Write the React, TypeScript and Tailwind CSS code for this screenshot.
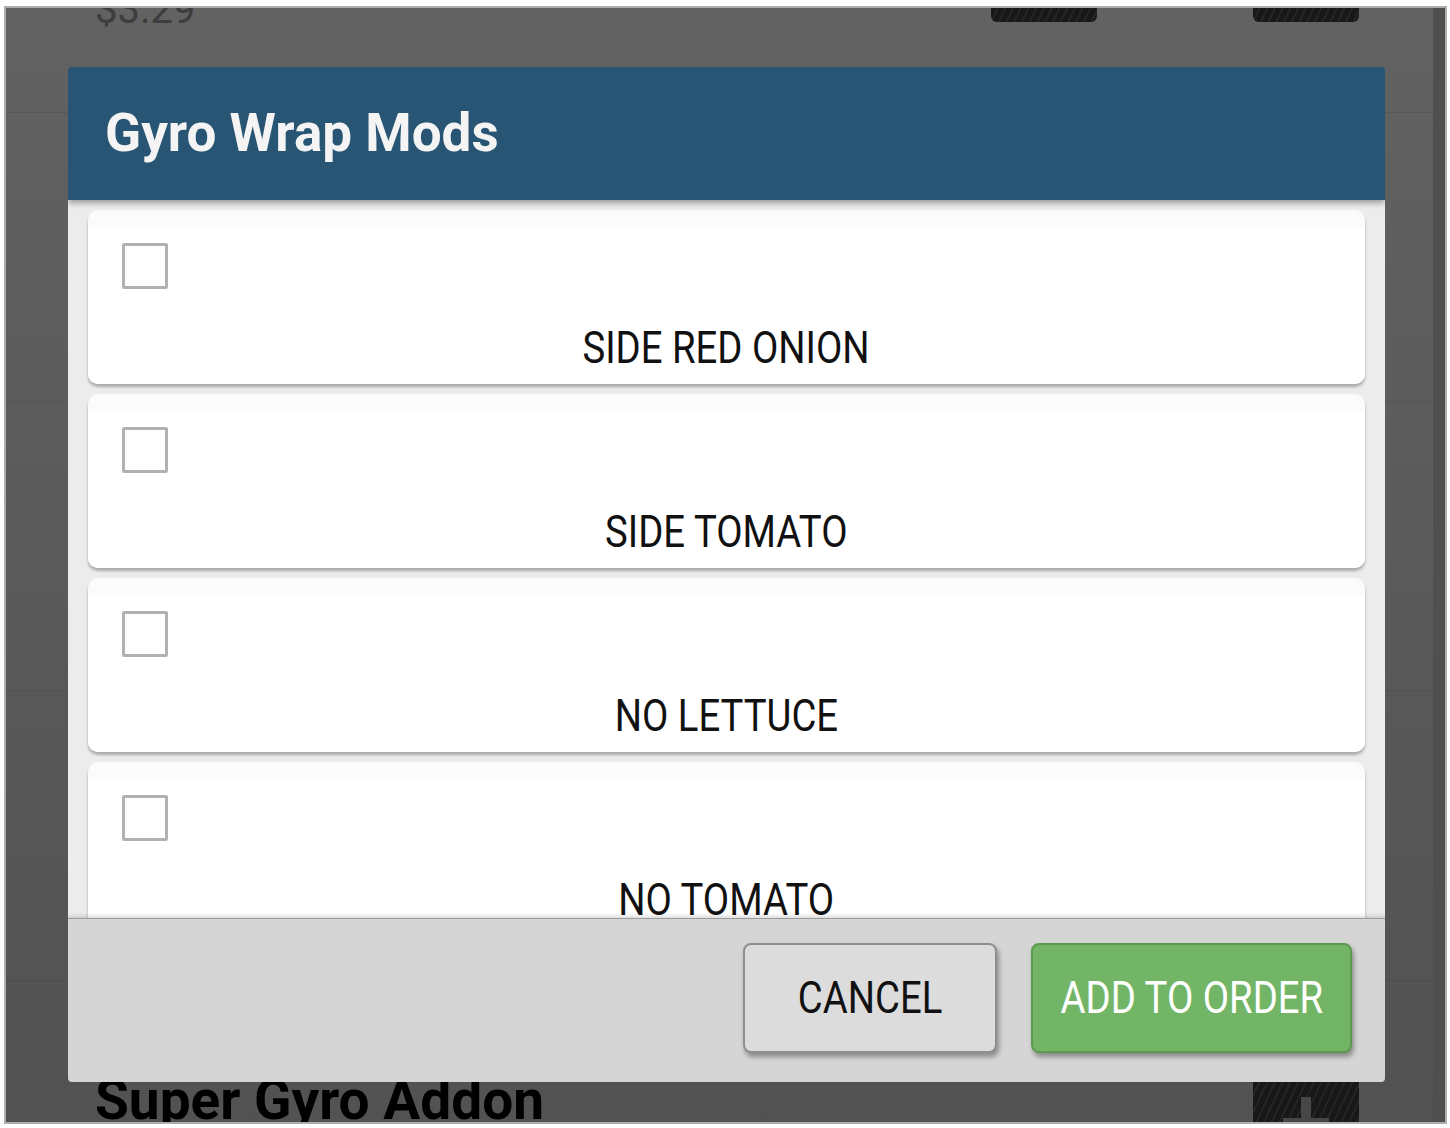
import React from "react";

const items = ["SIDE RED ONION", "SIDE TOMATO", "NO LETTUCE", "NO TOMATO"];

const cond = "inline-block scale-x-[0.87] whitespace-nowrap";

function Card({ label }: { label: string }) {
  return (
    <div className="h-[174px] shrink-0 rounded-[10px] bg-[linear-gradient(to_bottom,#fbfbfb_0px,#fbfbfb_18px,#ffffff_18px)] shadow-[0_3px_3px_rgba(0,0,0,0.28)] pt-[33px]">
      <div className="pl-[34px]">
        <div className="h-[46px] w-[46px] rounded-[2px] border-[3px] border-[#b1b1b1] bg-white" />
      </div>
      <div className="mt-[33px] text-center text-[44px] leading-[53px] text-[#111]">
        <span className={cond}>{label}</span>
      </div>
    </div>
  );
}

export default function App() {
  return (
    <div
      className="w-[1450px] h-[1128px] bg-white pl-[4px] pt-[6px] overflow-hidden"
      style={{ fontFamily: "Roboto, 'Liberation Sans', sans-serif" }}
    >
      <div className="w-[1443px] h-[1118px] border-2 border-[#aeaeae] flex">
        {/* main area */}
        <div className="relative w-[1427px] h-full overflow-hidden bg-[linear-gradient(to_bottom,#626262,#525252)]">
          {/* background list */}
          <div className="flex flex-col">
            <div className="h-[105px] border-b border-[#575757] flex items-start pl-[89px] pr-[74px]">
              <div className="mt-[-18px] text-[40px] leading-none text-[#3d3d3d]">$3.29</div>
              <div className="flex-1" />
              <div className="h-[14px] w-[106px] rounded-b-[6px] bg-[repeating-linear-gradient(115deg,#181818_0px,#181818_5px,#242424_5px,#242424_7px)]" />
              <div className="ml-[156px] h-[14px] w-[106px] rounded-b-[6px] bg-[repeating-linear-gradient(115deg,#181818_0px,#181818_5px,#242424_5px,#242424_7px)]" />
            </div>
            <div className="h-[289px] border-b border-[#555]" />
            <div className="h-[289px] border-b border-[#535353]" />
            <div className="h-[290px] border-b border-[#4c4c4c]" />
            <div className="flex items-start pl-[89px] pr-[74px]">
              <div className="mt-[92px] text-[55px] leading-none font-bold text-black whitespace-nowrap">
                Super Gyro Addon
              </div>
              <div className="flex-1" />
              <div className="relative mt-[101px] h-[60px] w-[106px] bg-[repeating-linear-gradient(115deg,#181818_0px,#181818_5px,#242424_5px,#242424_7px)]">
                <div className="absolute left-[48px] top-[15px] h-[40px] w-[10px] bg-[#474747]" />
                <div className="absolute left-[30px] top-[36px] h-[10px] w-[46px] bg-[#474747]" />
              </div>
            </div>
          </div>

          {/* dialog */}
          <div className="absolute left-[62px] top-[59px] w-[1317px] h-[1015px] flex flex-col rounded-[4px] overflow-hidden">
            <div className="relative z-10 h-[133px] shrink-0 bg-[#285573] flex items-center pl-[37px] shadow-[0_3px_6px_rgba(0,0,0,0.35)]">
              <span className="text-[53px] font-bold text-[#f4f4f4] leading-none">Gyro Wrap Mods</span>
            </div>
            <div className="h-[718px] shrink-0 overflow-hidden bg-[#ececec] px-[20px] pt-[10px] flex flex-col gap-[10px]">
              {items.map((it) => (
                <Card key={it} label={it} />
              ))}
            </div>
            <div className="relative z-10 flex-1 bg-[#d5d5d5] border-t border-[#9c9c9c] flex justify-end items-start pt-[24px] pr-[33px] gap-[34px] shadow-[0_-2px_4px_rgba(0,0,0,0.15)]">
              <button className="h-[110px] w-[254px] rounded-[8px] border-2 border-[#8f8f8f] bg-[#dcdcdc] shadow-[2px_4px_5px_rgba(0,0,0,0.35)] flex items-center justify-center text-[44px] leading-none text-[#111]">
                <span className={cond}>CANCEL</span>
              </button>
              <button className="h-[110px] w-[321px] rounded-[8px] border-2 border-[#5c9a52] bg-[#73b567] shadow-[2px_4px_5px_rgba(0,0,0,0.35)] flex items-center justify-center text-[44px] leading-none text-white">
                <span className={cond}>ADD TO ORDER</span>
              </button>
            </div>
          </div>
        </div>
        {/* right strip */}
        <div className="w-[12px] h-full bg-[#4f4f4f]" />
      </div>
    </div>
  );
}
